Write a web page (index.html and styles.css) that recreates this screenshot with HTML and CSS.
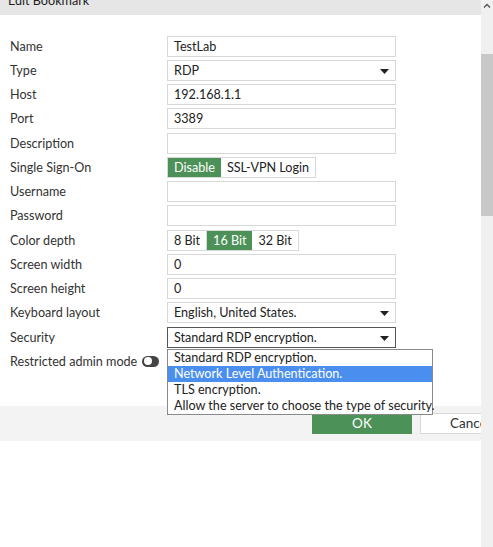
FILE: index.html
```html
<!DOCTYPE html>
<html>
<head>
<meta charset="utf-8">
<link rel="stylesheet" href="styles.css">
</head>
<body>
<div class="page">
  <div class="main">
    <div class="header"><span class="title">Edit Bookmark</span></div>
    <div class="form">
      <div class="row"><div class="label">Name</div><div class="input">TestLab</div></div>
      <div class="row"><div class="label">Type</div><div class="input select">RDP<svg class="caret" width="9" height="5" viewBox="0 0 9 5"><path d="M0 0H9L4.5 5Z" fill="#222"/></svg></div></div>
      <div class="row"><div class="label">Host</div><div class="input">192.168.1.1</div></div>
      <div class="row"><div class="label">Port</div><div class="input">3389</div></div>
      <div class="row"><div class="label">Description</div><div class="input"></div></div>
      <div class="row"><div class="label">Single Sign-On</div><div class="seg"><span class="opt on">Disable</span><span class="opt">SSL-VPN Login</span></div></div>
      <div class="row"><div class="label">Username</div><div class="input"></div></div>
      <div class="row"><div class="label">Password</div><div class="input"></div></div>
      <div class="row"><div class="label">Color depth</div><div class="seg"><span class="opt">8 Bit</span><span class="opt on">16 Bit</span><span class="opt">32 Bit</span></div></div>
      <div class="row"><div class="label">Screen width</div><div class="input">0</div></div>
      <div class="row"><div class="label">Screen height</div><div class="input">0</div></div>
      <div class="row"><div class="label">Keyboard layout</div><div class="input select">English, United States.<svg class="caret" width="9" height="5" viewBox="0 0 9 5"><path d="M0 0H9L4.5 5Z" fill="#222"/></svg></div></div>
      <div class="row"><div class="label">Security</div><div class="input select focus">Standard RDP encryption.<svg class="caret" width="9" height="5" viewBox="0 0 9 5"><path d="M0 0H9L4.5 5Z" fill="#222"/></svg>
        <div class="dropdown">
          <div class="item">Standard RDP encryption.</div>
          <div class="item sel">Network Level Authentication.</div>
          <div class="item">TLS encryption.</div>
          <div class="item">Allow the server to choose the type of security.</div>
        </div>
      </div></div>
      <div class="row"><div class="label toggle-label">Restricted admin mode <span class="toggle"><span class="knob"></span></span></div></div>
    </div>
    <div class="footer">
      <div class="btn ok">OK</div>
      <div class="btn cancel">Cancel</div>
    </div>
  </div>
  <div class="scrollbar">
    <svg class="up" width="8" height="5" viewBox="0 0 8 5"><path d="M1 4.5L4 1.5L7 4.5" fill="none" stroke="#555" stroke-width="1.4"/></svg>
    <div class="thumb"></div>
  </div>
</div>
</body>
</html>
```

FILE: styles.css
```css
html, body {
  margin: 0;
  padding: 0;
  background: #fff;
}
body {
  font-family: Lato, "Open Sans", sans-serif;
  font-size: 12.6px;
  color: #333;
}
.page {
  display: flex;
  width: 493px;
  height: 547px;
  overflow: hidden;
}
.main {
  width: 481px;
  display: flex;
  flex-direction: column;
}
.header {
  height: 15px;
  background: #e6e6e6;
  overflow: hidden;
  padding-left: 8px;
}
.title {
  display: block;
  margin-top: -7px;
  line-height: 16px;
  font-size: 12.6px;
  color: #222;
}
.form {
  padding-top: 20.5px;
  display: flex;
  flex-direction: column;
}
.row {
  display: flex;
  align-items: center;
  height: 21px;
  margin-bottom: 3.25px;
}
.label {
  width: 157px;
  padding-left: 10px;
  color: #333;
  white-space: nowrap;
}
.input {
  position: relative;
  box-sizing: border-box;
  width: 229px;
  height: 21px;
  border: 1px solid #d8d8d8;
  padding: 0 6px;
  line-height: 19px;
  color: #222;
  display: flex;
  align-items: center;
}
.select .caret {
  position: absolute;
  right: 6px;
  top: 8px;
}
.focus {
  border-color: #555;
}
.seg {
  display: flex;
  height: 21px;
  box-sizing: border-box;
  border: 1px solid #d8d8d8;
}
.opt {
  padding: 0 6px;
  line-height: 19px;
  color: #222;
}
.opt.on {
  background: #4c9158;
  color: #fff;
}
.opt + .opt {
  border-left: 1px solid #d8d8d8;
}
.opt.on + .opt {
  border-left: none;
}
.dropdown {
  position: absolute;
  left: -1px;
  top: 21px;
  width: 266px;
  box-sizing: border-box;
  border: 1px solid #8a8a8a;
  background: #fff;
  z-index: 5;
  padding: 0;
}
.item {
  height: 16px;
  line-height: 16px;
  padding-left: 6px;
  color: #222;
  white-space: nowrap;
}
.item.sel {
  background: #4a8ff0;
  color: #fff;
}
.toggle-label {
  display: flex;
  align-items: center;
  width: auto;
}
.toggle {
  display: inline-block;
  position: relative;
  width: 17px;
  height: 11px;
  border-radius: 6px;
  background: #444;
  margin-left: 5px;
}
.knob {
  position: absolute;
  left: 1.5px;
  top: 1.5px;
  width: 8px;
  height: 8px;
  border-radius: 50%;
  background: #fff;
}
.footer {
  margin-top: 31px;
  height: 35px;
  background: #f3f3f3;
  display: flex;
  padding-left: 312px;
  padding-top: 7px;
  box-sizing: border-box;
  gap: 8px;
  overflow: hidden;
}
.btn {
  height: 21px;
  box-sizing: border-box;
  line-height: 21px;
  text-align: center;
  font-size: 13.5px;
  flex-shrink: 0;
}
.ok {
  width: 100px;
  background: #4c9158;
  color: #fff;
}
.cancel {
  width: 100px;
  background: #fff;
  border: 1px solid #d8d8d8;
  line-height: 19px;
  color: #333;
}
.scrollbar {
  width: 12px;
  background: #f0f0f0;
  position: relative;
  display: flex;
  flex-direction: column;
  align-items: center;
}
.up {
  margin-top: 3px;
}
.thumb {
  margin-top: 46px;
  width: 12px;
  height: 162px;
  background: #c8c8c8;
}
```
